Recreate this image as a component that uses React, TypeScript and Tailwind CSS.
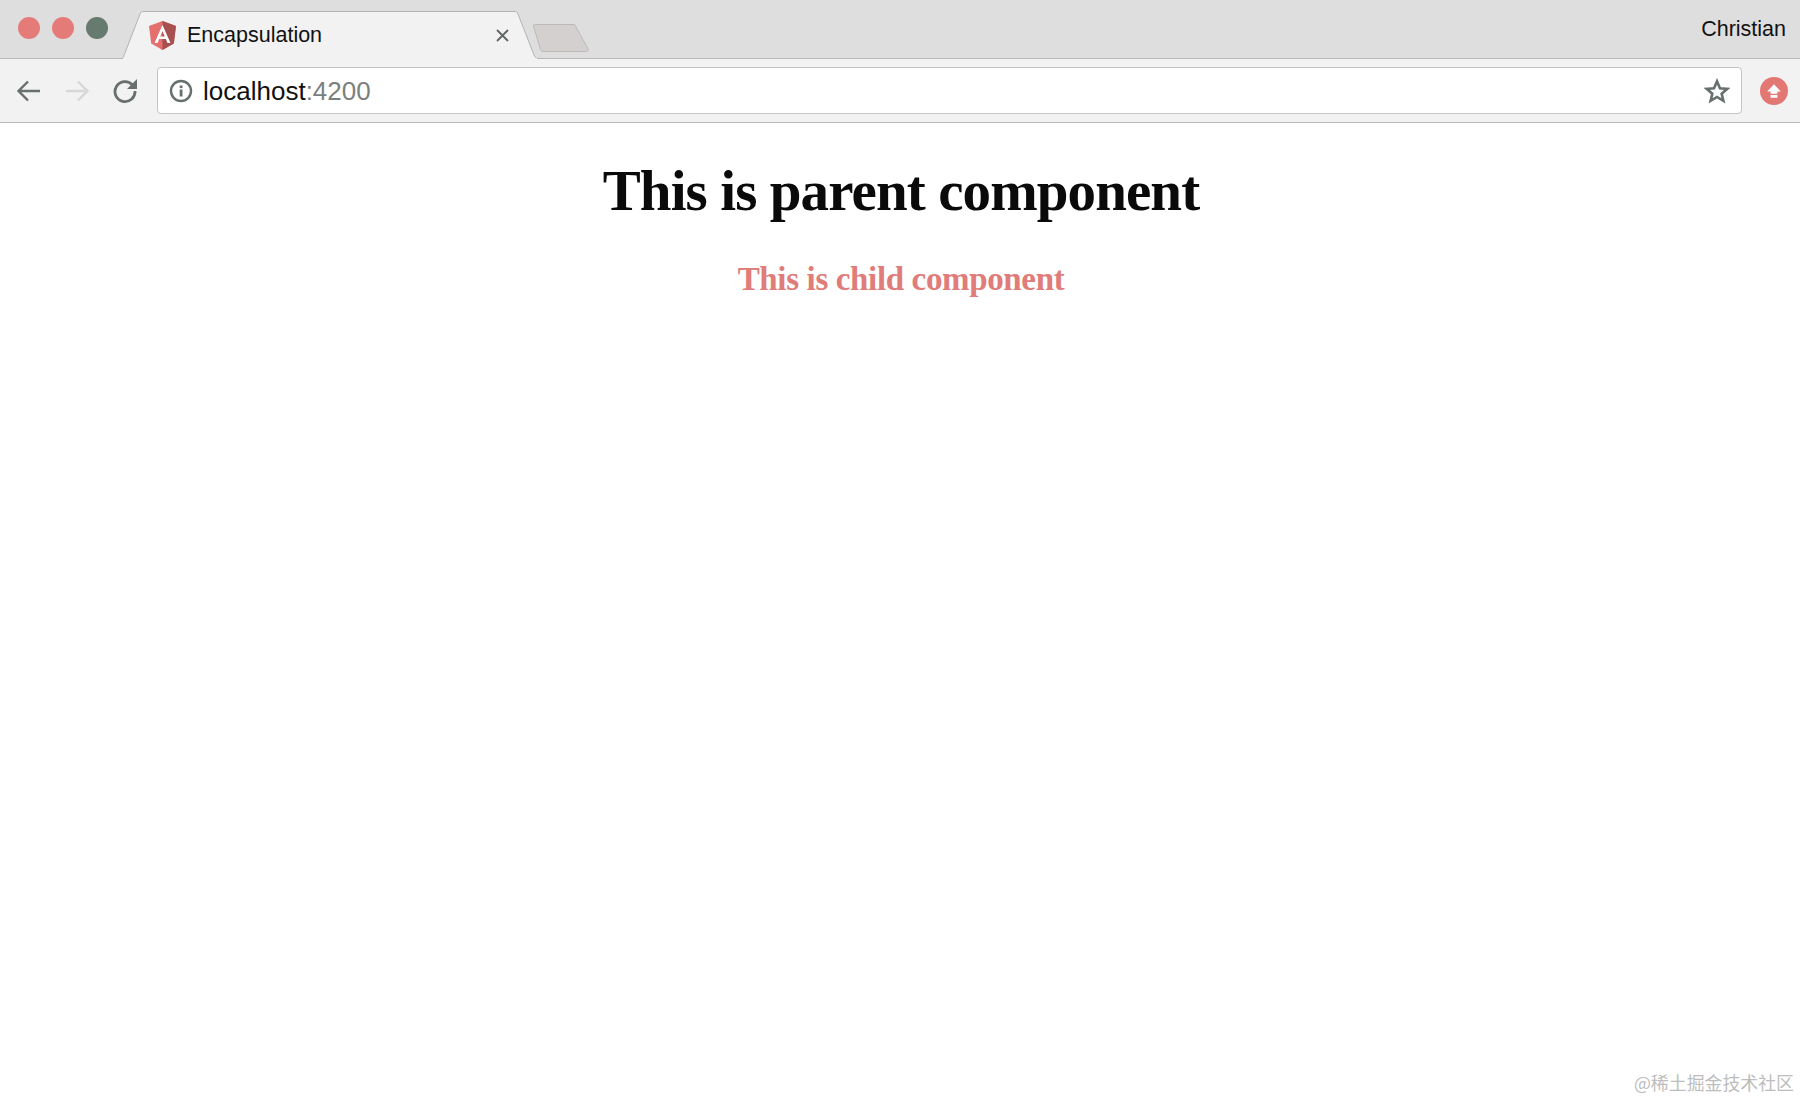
import React from "react";

const sans = "font-['Liberation_Sans',Arial,sans-serif]";

const BrowserTabs = () => {
  return (
    <div className={`relative flex h-[59px] items-start bg-[#dedede] ${sans}`}>
      <div className="absolute bottom-0 left-0 right-0 h-px bg-[#b8b8b8]"></div>
      <div className="flex w-[122px] shrink-0 gap-[12px] pl-[18px] pt-[17px]">
        <span className="h-[22px] w-[22px] rounded-full bg-[#e57b78]"></span>
        <span className="h-[22px] w-[22px] rounded-full bg-[#e57b78]"></span>
        <span className="h-[22px] w-[22px] rounded-full bg-[#667a70]"></span>
      </div>
      <div className="relative mt-[11px] flex h-[48px] w-[416px] shrink-0 items-center pl-[27px] pr-[26px]">
        <svg className="absolute inset-0" width="416" height="48" viewBox="0 0 416 48">
          <path d="M0 47.500 C1 47.500 1.500 46 2 44.500 L18 3 C19 1 20 .5 22 .5 H392 C394 .5 395 1 396 3 L412 44 C413 46 414 47.500 416 47.500" fill="#f2f2f2" stroke="#b4b4b4" />
          <rect x="1" y="47" width="414" height="1" fill="#f2f2f2" />
        </svg>
        <svg className="relative shrink-0" width="27" height="29" viewBox="0 0 27 29">
          <path d="M13.500 0 L27 5 L24.800 22.500 L13.500 29 L2.200 22.500 L0 5 Z" fill="#e36f6f" />
          <path d="M13.500 0 L27 5 L24.800 22.500 L13.500 29 Z" fill="#a8504f" />
          <path d="M13.500 4 L5.500 22 H8.500 L10.200 18 H16.800 L18.500 22 H21.500 Z M11.300 15.500 L13.500 10 L15.700 15.500 Z" fill="#fff" fillRule="evenodd" />
        </svg>
        <span className="relative ml-[11px] mt-[1px] text-[21.500px] leading-none text-[#111]">Encapsulation</span>
        <svg className="absolute left-[374px] top-[18px]" width="13" height="13" viewBox="0 0 13 13">
          <path d="M1 1 L12 12 M12 1 L1 12" stroke="#5f6664" strokeWidth="1.800" />
        </svg>
      </div>
      <svg className="ml-[-6px] mt-[23px] shrink-0" width="57" height="30" viewBox="0 0 57 30">
        <path d="M2.500 1.500 H41 C42.500 1.500 43 2 43.500 3 L56 26 C56.500 27.500 56 28.500 54.500 28.500 H11 C9.500 28.500 9 28 8.500 26.500 L1.500 3 C1.200 2 1.500 1.500 2.500 1.500 Z" fill="#d5d0d0" stroke="#bdb9b9" />
      </svg>
      <span className="ml-auto mr-[14px] mt-[17px] text-[21.500px] leading-[24px] text-[#111]">Christian</span>
    </div>
  );
};

const Toolbar = () => {
  return (
    <div className={`flex h-[64px] items-start border-b border-[#b8b8b8] bg-[#f2f2f2] pt-[8px] ${sans}`}>
      <div className="flex h-[47px] w-[157px] shrink-0 items-center pl-[16px]">
        <svg width="26" height="26" viewBox="0 0 26 26">
          <path d="M24 13 H3 M12 3.500 L2.500 13 L12 22.500" fill="none" stroke="#68706d" strokeWidth="2.400" />
        </svg>
        <svg className="ml-[22px]" width="26" height="26" viewBox="0 0 26 26">
          <path d="M2 13 H23 M14 3.500 L23.500 13 L14 22.500" fill="none" stroke="#d6d8d7" strokeWidth="2.400" />
        </svg>
        <svg className="ml-[22px]" width="26" height="26" viewBox="0 0 26 26">
          <path d="M20.500 7 A10 10 0 1 0 23 13" fill="none" stroke="#68706d" strokeWidth="2.800" />
          <path d="M25 1 V11 H15 Z" fill="#68706d" />
        </svg>
      </div>
      <div className="flex h-[47px] flex-1 items-center rounded-[4px] border border-[#c4c4c4] bg-white pl-[11px] pr-[11px]">
        <svg className="shrink-0" width="24" height="24" viewBox="0 0 24 24">
          <circle cx="12" cy="12" r="10" fill="none" stroke="#68706d" strokeWidth="2.400" />
          <rect x="10.700" y="10.500" width="2.800" height="7" fill="#68706d" />
          <rect x="10.700" y="6.500" width="2.800" height="2.600" fill="#68706d" />
        </svg>
        <span className="ml-[10px] text-[26px] leading-none text-[#111]">
          localhost<span className="text-[#7b7f7e]">:4200</span>
        </span>
        <svg className="ml-auto shrink-0" width="26" height="26" viewBox="0 0 24 24">
          <path d="M12 3 L14.700 9.400 L21.500 10 L16.300 14.500 L17.900 21 L12 17.500 L6.100 21 L7.700 14.500 L2.500 10 L9.300 9.400 Z" fill="none" stroke="#68706d" strokeWidth="2.400" />
        </svg>
      </div>
      <div className="flex h-[47px] w-[58px] shrink-0 items-center justify-end pr-[12px]">
        <div className="flex h-[28px] w-[28px] items-center justify-center rounded-full bg-[#e37773]">
          <svg width="16" height="16" viewBox="0 0 14 14">
            <path d="M7 1 L13 7.500 H10 V9.500 H4 V7.500 H1 Z M4 10.500 H10 V13 H4 Z" fill="#fff" />
          </svg>
        </div>
      </div>
    </div>
  );
};

const App = () => {
  return (
    <div className="relative h-[1100px] overflow-hidden bg-white">
      <BrowserTabs />
      <Toolbar />
      <main className="pl-[2px] pt-[37px] text-center font-['Liberation_Serif','Times_New_Roman',serif] font-bold">
        <h1 className="text-[57px] leading-[61px] tracking-[-0.9px] text-[#0a0a0a]">This is parent component</h1>
        <h2 className="mt-[40px] text-[33px] leading-[37px] tracking-[-0.35px] text-[#e07c79]">This is child component</h2>
      </main>
      <span className="absolute bottom-[6px] right-[6px] font-['Noto_Sans_CJK_SC',sans-serif] text-[17.900px] leading-[24px] text-[#bdbdbd]">
        @稀土掘金技术社区
      </span>
    </div>
  );
};

export default App;
